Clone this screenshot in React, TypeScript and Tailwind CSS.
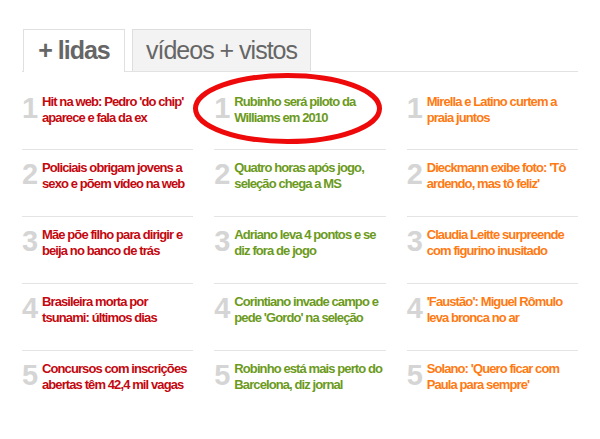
const COLUNAS = [
  {
    cor: 'text-[#c4080f]',
    itens: [
      ['Hit na web: Pedro \'do chip\'', 'aparece e fala da ex'],
      ['Policiais obrigam jovens a', 'sexo e põem vídeo na web'],
      ['Mãe põe filho para dirigir e', 'beija no banco de trás'],
      ['Brasileira morta por', 'tsunami: últimos dias'],
      ['Concursos com inscrições', 'abertas têm 42,4 mil vagas'],
    ],
  },
  {
    cor: 'text-[#6b9a1c]',
    itens: [
      ['Rubinho será piloto da', 'Williams em 2010'],
      ['Quatro horas após jogo,', 'seleção chega a MS'],
      ['Adriano leva 4 pontos e se', 'diz fora de jogo'],
      ['Corintiano invade campo e', 'pede \'Gordo\' na seleção'],
      ['Robinho está mais perto do', 'Barcelona, diz jornal'],
    ],
  },
  {
    cor: 'text-[#ff7a12]',
    itens: [
      ['Mirella e Latino curtem a', 'praia juntos'],
      ['Dieckmann exibe foto: \'Tô', 'ardendo, mas tô feliz\''],
      ['Claudia Leitte surpreende', 'com figurino inusitado'],
      ['\'Faustão\': Miguel Rômulo', 'leva bronca no ar'],
      ['Solano: \'Quero ficar com', 'Paula para sempre\''],
    ],
  },
]

export default function App() {
  return (
    <div className="relative w-[600px] h-[439px] bg-white overflow-hidden font-['Liberation_Sans',Arial,sans-serif]">
      <div className="w-[556px] ml-[22px] pt-[29px]">
        {/* Abas */}
        <div className="flex items-end border-b border-[#e2e2e2]">
          <div className="ml-px w-[102px] h-[43px] -mb-px bg-white border border-b-0 border-[#e0e0e0] flex items-center justify-center">
            <span className="text-[25px] font-bold text-[#666] tracking-[-1px]">+ lidas</span>
          </div>
          <div className="ml-[7px] w-[179px] h-[42px] bg-[#f3f3f3] border border-b-0 border-[#dedede] flex items-center justify-center">
            <span className="text-[25px] text-[#666] tracking-[-1px]">vídeos + vistos</span>
          </div>
        </div>

        {/* Listas */}
        <div className="grid grid-cols-3 gap-x-[21px]">
          {COLUNAS.map((col, c) => (
            <div key={c} className="flex flex-col">
              {col.itens.map((linhas, i) => (
                <div
                  key={i}
                  className={`flex items-start ${i === 0 ? 'h-[78px] pt-[22px]' : 'h-[67px] pt-[10px]'} ${i < 4 ? 'border-b border-[#e4e4e4]' : ''}`}
                >
                  <span className="w-[20px] shrink-0 text-[29px] leading-[28px] font-bold text-[#d5d5d5]">{i + 1}</span>
                  <p className={`text-[13px] leading-[16px] font-bold tracking-[-0.9px] whitespace-nowrap ${col.cor}`}>
                    {linhas[0]}
                    <br />
                    {linhas[1]}
                  </p>
                </div>
              ))}
            </div>
          ))}
        </div>
      </div>

      {/* Círculo vermelho */}
      <svg className="absolute left-[190px] top-[70px]" width="196" height="78" viewBox="0 0 196 78">
        <ellipse cx="97.5" cy="38.5" rx="92" ry="33" fill="none" stroke="#ee0a0a" strokeWidth="5" />
      </svg>
    </div>
  )
}
